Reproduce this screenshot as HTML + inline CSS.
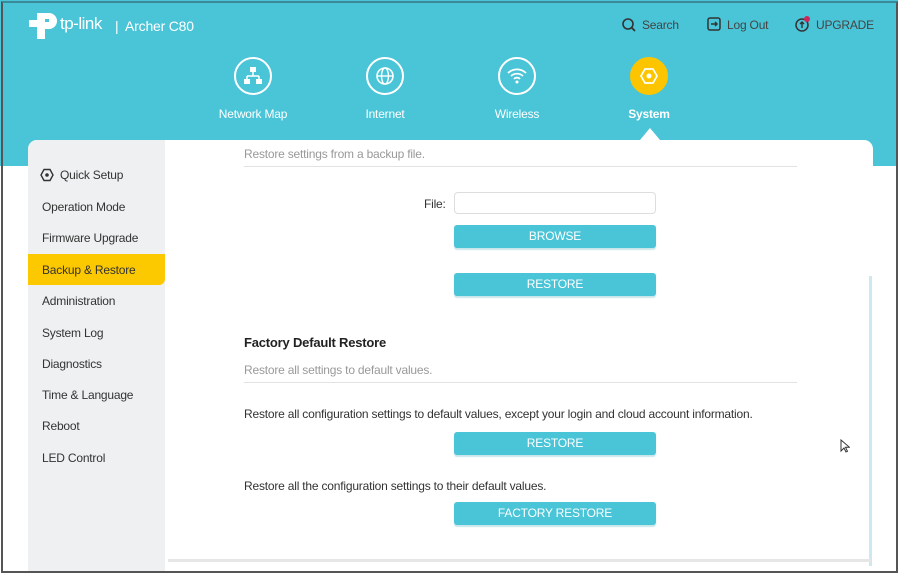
<!DOCTYPE html>
<html><head><style>
*{margin:0;padding:0;box-sizing:border-box}
body{width:900px;height:580px;background:#fff;font-family:"Liberation Sans",Arial,sans-serif;position:relative;overflow:hidden;letter-spacing:-0.2px}
.clip{position:absolute;left:0;top:0;width:898px;height:573px;overflow:hidden}
.frame{position:absolute;left:1px;top:1px;width:897px;height:572px;border:2px solid #555;border-top-color:#3a8a99;z-index:10;pointer-events:none}
.hdr{position:absolute;left:0;top:0;width:100%;height:166px;background:#4ac4d7}
.abs{position:absolute}
.w{color:#fff}
.nav{position:absolute;top:57px;width:120px;text-align:center;color:#fff;font-size:12px}
.nav .c{width:38px;height:38px;border:2px solid #fff;border-radius:50%;margin:0 auto 12px;position:relative}
.panel{position:absolute;left:28px;top:140px;width:845px;height:440px;background:#fff;border-radius:9px 9px 0 0}
.side{position:absolute;left:28px;top:140px;width:137px;height:440px;background:#eef0f1;border-radius:9px 0 0 0}
.si{position:absolute;left:14px;font-size:12px;color:#333}
.btn{position:absolute;width:202px;height:23px;background:#4ac4d7;border-radius:3px;color:#fff;font-size:12px;text-align:center;line-height:22px;box-shadow:0 2px 1px #c9e6ea}
.t{position:absolute;font-size:12px;color:#333}
.g{color:#999}
.hr{position:absolute;left:244px;width:553px;height:1px;background:#e2e2e2}
</style></head><body>
<div class="clip">
<div class="hdr"></div>
<svg class="abs" style="left:27px;top:9px" width="34" height="32" viewBox="0 0 34 32"><path d="M10 4 h12 a8 8 0 0 1 0 16 h-4 v10 h-8 z" fill="#fff"/><rect x="2" y="11" width="8" height="7" fill="#fff"/><rect x="18" y="10" width="4" height="3" fill="#4ac4d7"/></svg>
<div class="abs w" style="left:60px;top:14px;font-size:17px;letter-spacing:-0.5px">tp-link</div>
<div class="abs w" style="left:115px;top:18px;font-size:14px">|&nbsp; Archer C80</div>
<svg class="abs" style="left:621px;top:17px" width="16" height="16" viewBox="0 0 16 16"><circle cx="7" cy="7" r="5" fill="none" stroke="#333" stroke-width="1.6"/><path d="M10.5 10.5 L14 14" stroke="#333" stroke-width="1.8"/></svg>
<div class="t" style="left:642px;top:18px;color:#444">Search</div>
<svg class="abs" style="left:707px;top:17px" width="15" height="15" viewBox="0 0 15 15"><rect x="1" y="1" width="12" height="12" rx="2" fill="none" stroke="#333" stroke-width="1.5"/><path d="M4 7h6M8 5l2 2-2 2" fill="none" stroke="#333" stroke-width="1.5"/></svg>
<div class="t" style="left:727px;top:18px;color:#444">Log Out</div>
<svg class="abs" style="left:794px;top:15px" width="18" height="18" viewBox="0 0 18 18"><circle cx="8" cy="10" r="6" fill="none" stroke="#333" stroke-width="1.5"/><path d="M8 13V7M6 9l2-2 2 2" fill="none" stroke="#333" stroke-width="1.4"/><circle cx="13" cy="4" r="3" fill="#d0245a"/></svg>
<div class="t" style="left:816px;top:18px;color:#444">UPGRADE</div>
<div class="nav" style="left:193px"><div class="c"><svg width="34" height="34" viewBox="0 0 34 34"><rect x="14" y="8" width="6" height="5" fill="#fff"/><path d="M17 13v4M11 17h12M11 17v4M23 17v4" stroke="#fff" stroke-width="1.5" fill="none"/><rect x="8" y="20" width="6" height="5" fill="#fff"/><rect x="20" y="20" width="6" height="5" fill="#fff"/></svg></div>Network Map</div>
<div class="nav" style="left:325px"><div class="c"><svg width="34" height="34" viewBox="0 0 34 34"><circle cx="17" cy="17" r="8" fill="none" stroke="#fff" stroke-width="1.6"/><ellipse cx="17" cy="17" rx="3.5" ry="8" fill="none" stroke="#fff" stroke-width="1.4"/><path d="M9 17h16" stroke="#fff" stroke-width="1.4"/></svg></div>Internet</div>
<div class="nav" style="left:457px"><div class="c"><svg width="34" height="34" viewBox="0 0 34 34"><path d="M8 14a13 13 0 0 1 18 0M11 17a9 9 0 0 1 12 0M14 20a4 4 0 0 1 6 0" fill="none" stroke="#fff" stroke-width="1.7"/><circle cx="17" cy="23" r="1.5" fill="#fff"/></svg></div>Wireless</div>
<div class="nav" style="left:589px;font-weight:bold"><div class="c" style="background:#fcc500;border-color:#fcc500"><svg width="34" height="34" viewBox="0 0 34 34"><path d="M13 10h8l4 7-4 7h-8l-4-7z" fill="none" stroke="#fff" stroke-width="1.7"/><circle cx="17" cy="17" r="2.5" fill="#fff"/></svg></div>System</div>
<div class="abs" style="left:640px;top:128px;width:0;height:0;border-left:10px solid transparent;border-right:10px solid transparent;border-bottom:12px solid #fff"></div>
<div class="panel"></div>
<div class="side">
<svg class="abs" style="left:12px;top:28px" width="14" height="14" viewBox="0 0 14 14"><path d="M4 1.5h6l3 5.5-3 5.5h-6l-3-5.5z" fill="none" stroke="#333" stroke-width="1.4"/><circle cx="7" cy="7" r="1.8" fill="#333"/></svg>
<div class="si" style="left:32px;top:28px">Quick Setup</div>
<div class="si" style="top:60px">Operation Mode</div>
<div class="si" style="top:91px">Firmware Upgrade</div>
<div class="abs" style="left:0;top:114px;width:137px;height:31px;background:#fcc800;border-radius:0 0 6px 0"></div>
<div class="si" style="top:123px">Backup &amp; Restore</div>
<div class="si" style="top:154px">Administration</div>
<div class="si" style="top:186px">System Log</div>
<div class="si" style="top:217px">Diagnostics</div>
<div class="si" style="top:248px">Time &amp; Language</div>
<div class="si" style="top:279px">Reboot</div>
<div class="si" style="top:311px">LED Control</div>
</div>
<div class="t g" style="left:244px;top:147px">Restore settings from a backup file.</div>
<div class="hr" style="top:166px"></div>
<div class="t" style="left:424px;top:197px">File:</div>
<div class="abs" style="left:454px;top:192px;width:202px;height:22px;border:1px solid #ddd;border-radius:4px"></div>
<div class="btn" style="left:454px;top:225px">BROWSE</div>
<div class="btn" style="left:454px;top:273px">RESTORE</div>
<div class="t" style="left:244px;top:335px;font-size:13px;font-weight:bold;color:#222">Factory Default Restore</div>
<div class="t g" style="left:244px;top:363px">Restore all settings to default values.</div>
<div class="hr" style="top:382px"></div>
<div class="t" style="left:244px;top:407px">Restore all configuration settings to default values, except your login and cloud account information.</div>
<div class="btn" style="left:454px;top:432px">RESTORE</div>
<div class="t" style="left:244px;top:479px">Restore all the configuration settings to their default values.</div>
<div class="btn" style="left:454px;top:502px">FACTORY RESTORE</div>
<div class="abs" style="left:869px;top:276px;width:3px;height:290px;background:#cde9ef"></div>
<div class="abs" style="left:168px;top:559px;width:703px;height:3px;background:#e6e6e6"></div>
<svg class="abs" style="left:840px;top:439px" width="10" height="15" viewBox="0 0 10 15"><path d="M1 1v11l3-3 2 4 1.5-.7-2-4h4z" fill="#fff" stroke="#333" stroke-width="1"/></svg>
</div>
<div class="frame"></div>
</body></html>
